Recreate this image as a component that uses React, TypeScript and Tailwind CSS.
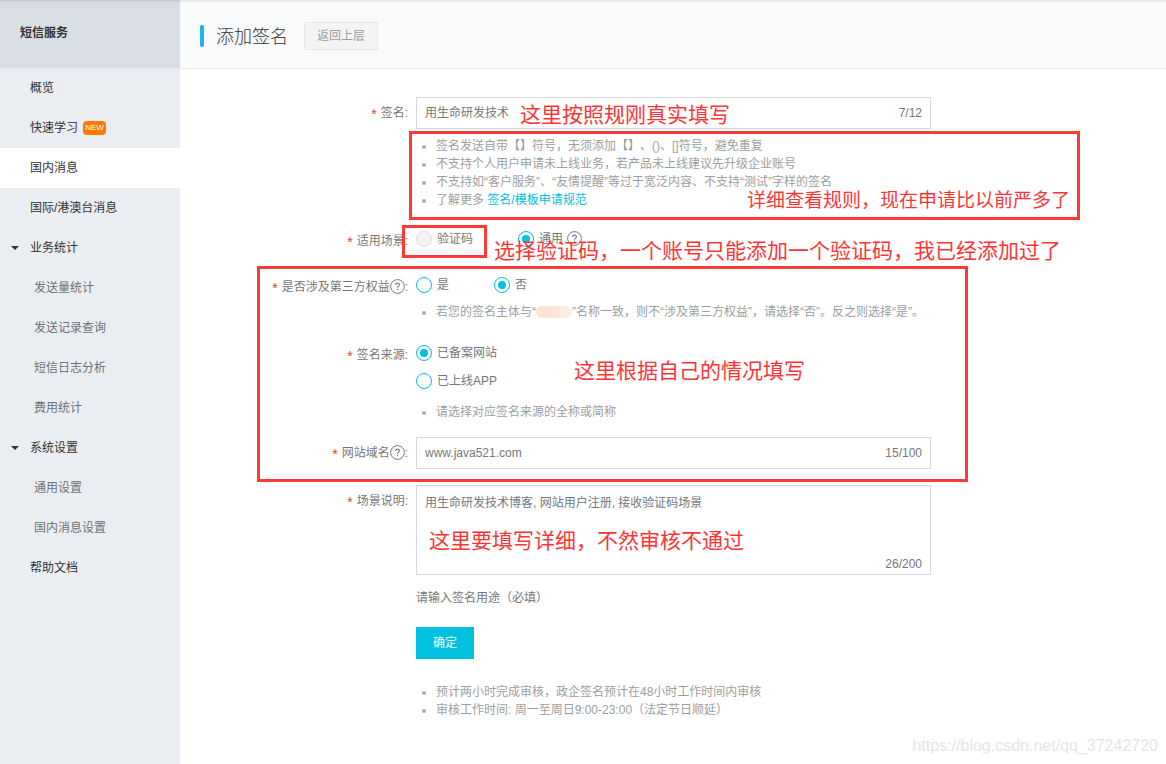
import type { ReactNode } from "react";

type NavEntry = {
  label: string;
  kind: "item" | "group" | "sub";
  active?: boolean;
  isNew?: boolean;
};

const NAV: NavEntry[] = [
  { label: "概览", kind: "item" },
  { label: "快速学习", kind: "item", isNew: true },
  { label: "国内消息", kind: "item", active: true },
  { label: "国际/港澳台消息", kind: "item" },
  { label: "业务统计", kind: "group" },
  { label: "发送量统计", kind: "sub" },
  { label: "发送记录查询", kind: "sub" },
  { label: "短信日志分析", kind: "sub" },
  { label: "费用统计", kind: "sub" },
  { label: "系统设置", kind: "group" },
  { label: "通用设置", kind: "sub" },
  { label: "国内消息设置", kind: "sub" },
  { label: "帮助文档", kind: "item" },
];

function Sidebar() {
  return (
    <aside className="w-[180px] shrink-0 bg-[#eaedf1]">
      <div className="flex h-[68px] items-center bg-[#d9dde4] pb-0.5 pl-5 font-bold text-[#333333]">
        短信服务
      </div>
      <nav>
        <ul>
          {NAV.map((entry) => (
            <li key={entry.label}>
              <a
                href="#"
                className={`flex h-10 items-center pb-px ${entry.kind === "sub" ? "pl-[34px] text-[#6d7278]" : "text-[#333333]"} ${
                  entry.kind === "group" ? "pl-[11px]" : ""
                } ${entry.kind === "item" ? "pl-[30px]" : ""} ${entry.active ? "bg-white" : ""}`}
              >
                {entry.kind === "group" && (
                  <svg className="mr-[11px] h-1 w-2" viewBox="0 0 8 4" aria-hidden="true">
                    <path d="M0 0h8L4 4z" fill="#333333" />
                  </svg>
                )}
                {entry.label}
                {entry.isNew && (
                  <span className="ml-[5px] flex h-3.5 w-[23px] items-center justify-center rounded-sm bg-[#ff7800] text-[8px] text-white">
                    NEW
                  </span>
                )}
              </a>
            </li>
          ))}
        </ul>
      </nav>
    </aside>
  );
}

function HelpButton() {
  return (
    <button type="button" aria-label="帮助" className="shrink-0">
      <svg className="mb-0.5 size-[15px]" viewBox="0 0 15 15" fill="none" stroke="#73777a">
        <circle cx="7.5" cy="7.5" r="6.9" strokeWidth="1" />
        <path d="M5.6 6c0-1.2.8-1.9 1.9-1.9s1.9.7 1.9 1.7c0 1.3-1.9 1.4-1.9 2.9" strokeWidth="1.1" />
        <path d="M7.5 9.8v1.2" strokeWidth="1.2" />
      </svg>
    </button>
  );
}

type RowProps = {
  label: string;
  htmlFor?: string;
  help?: boolean;
  tall?: boolean;
  className?: string;
  children: ReactNode;
};

function Row({ label, htmlFor, help, tall, className = "", children }: RowProps) {
  return (
    <div className={`flex gap-2 ${className}`}>
      <div className={`flex w-[228px] shrink-0 items-center justify-end ${tall ? "h-8" : "h-[22px]"}`}>
        <span className="mr-1 pt-0.5 text-sm text-[#e0441f]">*</span>
        {htmlFor ? <label htmlFor={htmlFor}>{label}</label> : <span>{label}</span>}
        {help && <HelpButton />}
        <span>:</span>
      </div>
      <div className="min-w-0 max-w-[515px] flex-1">{children}</div>
    </div>
  );
}

type RadioProps = { name: string; label: string; checked?: boolean; disabled?: boolean };

function Radio({ name, label, checked, disabled }: RadioProps) {
  return (
    <label className="flex h-[18px] items-center gap-[5px]">
      <input
        type="radio"
        name={name}
        defaultChecked={checked}
        disabled={disabled}
        className="size-4 shrink-0 appearance-none rounded-full border border-[#00c1de] bg-clip-content p-[3px] checked:bg-[#00c1de] disabled:border-[#dddddd] disabled:bg-[#f4f4f4] disabled:bg-clip-border"
      />
      {label}
    </label>
  );
}

function Tips({ children, className = "" }: { children: ReactNode; className?: string }) {
  return <ul className={`text-[#9b9ea0] ${className}`}>{children}</ul>;
}

function Tip({ children }: { children: ReactNode }) {
  return (
    <li className="flex items-center whitespace-nowrap">
      <span className="ml-1.5 mr-2.5 mt-0.5 size-1 shrink-0 rounded-full bg-[#a9adb0]" />
      <span>{children}</span>
    </li>
  );
}

function CountedInput({ id, value, count }: { id: string; value: string; count: string }) {
  return (
    <div className="flex h-8 items-center border border-[#d7d8d9] px-2">
      <input id={id} defaultValue={value} className="min-w-0 flex-1 bg-transparent outline-none" />
      <span>{count}</span>
    </div>
  );
}

function Annotations() {
  return (
    <div className="pointer-events-none absolute inset-0 whitespace-nowrap text-[21px] leading-[30px] text-[#ff3535]">
      <div className="absolute left-[409px] top-[131px] h-[89px] w-[671px] border-[3px] border-[#ff3838]" />
      <div className="absolute left-[402px] top-[225px] h-[33px] w-[85px] border-[3px] border-[#ff3838]" />
      <div className="absolute left-[257px] top-[266px] h-[216px] w-[711px] border-[3px] border-[#ff3838]" />
      <p className="absolute left-[520px] top-[100px]">这里按照规刚真实填写</p>
      <p className="absolute left-[747px] top-[186px] text-[19px]">详细查看规则，现在申请比以前严多了</p>
      <p className="absolute left-[494px] top-[236px]">选择验证码，一个账号只能添加一个验证码，我已经添加过了</p>
      <p className="absolute left-[574px] top-[356px]">这里根据自己的情况填写</p>
      <p className="absolute left-[429px] top-[526px]">这里要填写详细，不然审核不通过</p>
    </div>
  );
}

export default function App() {
  return (
    <div
      lang="zh-CN"
      className="relative flex min-h-screen bg-white font-['Liberation_Sans','Noto_Sans_CJK_SC',sans-serif] text-xs leading-[18px] text-[#73777a] [text-spacing-trim:space-all]"
    >
      <div className="absolute inset-x-0 top-0 h-[3px] bg-linear-to-b from-black/10 to-transparent" />
      <Sidebar />
      <main className="min-w-0 flex-1">
        <header className="flex h-[69px] items-center border-b border-[#ebecec] bg-[#f9fafc] pl-5 pt-1">
          <span className="mr-3 h-[22px] w-1 rounded-xs bg-linear-to-b from-[#00c1de] to-[#35a4f4]" />
          <h1 className="mr-4 pt-0.5 text-lg font-light text-[#333333]">添加签名</h1>
          <button type="button" className="h-7 w-[74px] border border-[#e8e8e8] bg-[#f4f4f4] text-[#9b9ea0]">
            返回上层
          </button>
        </header>

        <form className="pt-7" onSubmit={(e) => e.preventDefault()}>
          <Row label="签名" htmlFor="sign" tall>
            <CountedInput id="sign" value="用生命研发技术" count="7/12" />
            <Tips className="mt-2">
              <Tip>签名发送自带【】符号，无须添加【】、()、[]符号，避免重复</Tip>
              <Tip>不支持个人用户申请未上线业务，若产品未上线建议先升级企业账号</Tip>
              <Tip>不支持如“客户服务”、“友情提醒”等过于宽泛内容、不支持“测试”字样的签名</Tip>
              <Tip>
                了解更多{" "}
                <a href="#" className="text-[#00c1de]">
                  签名/模板申请规范
                </a>
              </Tip>
            </Tips>
          </Row>

          <Row label="适用场景" className="mt-[21px]">
            <div className="flex gap-[45px]">
              <Radio name="scene" label="验证码" disabled />
              <div className="flex items-center gap-1">
                <Radio name="scene" label="通用" checked />
                <HelpButton />
              </div>
            </div>
          </Row>

          <Row label="是否涉及第三方权益" help className="mt-6">
            <div className="flex gap-[45px]">
              <Radio name="third" label="是" />
              <Radio name="third" label="否" checked />
            </div>
            <Tips className="mt-[9px]">
              <Tip>
                若您的签名主体与“
                <span className="mb-0.5 inline-block h-3 w-9 rounded-full bg-linear-to-r from-[#ffe4d3] from-60% to-[#faeee6] to-70% align-middle" />
                ”名称一致，则不“涉及第三方权益”，请选择“否”。反之则选择“是”。
              </Tip>
            </Tips>
          </Row>

          <Row label="签名来源" className="mt-[23px]">
            <div className="flex flex-col gap-2.5">
              <Radio name="source" label="已备案网站" checked />
              <Radio name="source" label="已上线APP" />
            </div>
            <Tips className="mt-[13px]">
              <Tip>请选择对应签名来源的全称或简称</Tip>
            </Tips>
          </Row>

          <Row label="网站域名" htmlFor="domain" help tall className="mt-4">
            <CountedInput id="domain" value="www.java521.com" count="15/100" />
          </Row>

          <Row label="场景说明" htmlFor="remark" tall className="mt-4">
            <div className="flex h-[90px] flex-col border border-[#d7d8d9] px-2 pb-px pt-2">
              <textarea
                id="remark"
                defaultValue="用生命研发技术博客, 网站用户注册, 接收验证码场景"
                className="min-h-0 flex-1 resize-none bg-transparent outline-none"
              />
              <span className="self-end">26/200</span>
            </div>
            <p className="mt-3.5">请输入签名用途（必填）</p>
            <button type="submit" className="mt-5 block h-8 w-[58px] bg-[#00c1de] text-white">
              确定
            </button>
            <Tips className="mt-6">
              <Tip>预计两小时完成审核，政企签名预计在48小时工作时间内审核</Tip>
              <Tip>审核工作时间: 周一至周日9:00-23:00（法定节日顺延）</Tip>
            </Tips>
          </Row>
        </form>
      </main>
      <Annotations />
      <p className="absolute bottom-2 right-2 text-base leading-5 text-[#e6e6e6]">
        https://blog.csdn.net/qq_37242720
      </p>
    </div>
  );
}
